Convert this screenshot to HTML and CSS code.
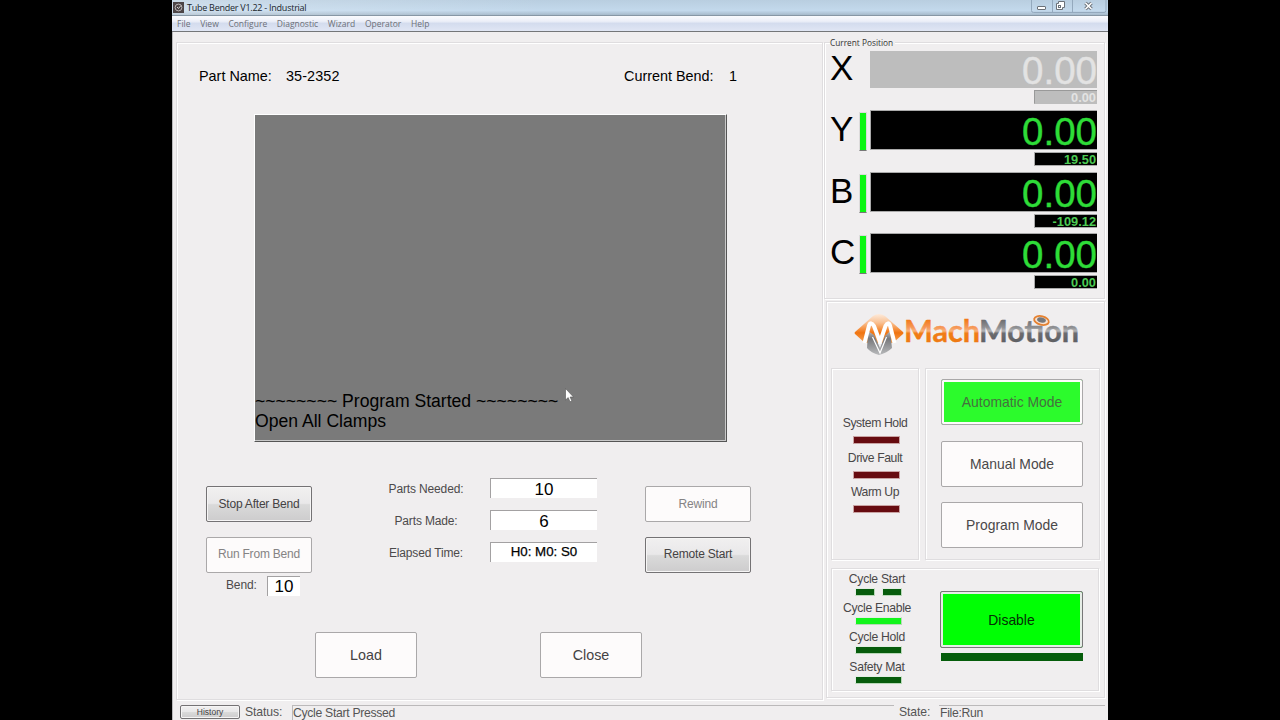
FILE: index.html
```html
<!DOCTYPE html>
<html lang="en">
<head>
    <meta charset="utf-8">
    <title>Tube Bender V1.22 - Industrial</title>
    <link rel="stylesheet" href="styles.css">
</head>
<body>
<div class="window">
    <div class="titlebar">
        <svg class="app-icon" width="11" height="11" viewBox="0 0 11 11">
            <rect width="11" height="11" fill="#4c4547"/>
            <circle cx="5.5" cy="5.5" r="3.4" fill="none" stroke="#b9b3b5" stroke-width="1"/>
            <path d="M4 5L5.5 6.500L8 3.500" fill="none" stroke="#ddd" stroke-width=".9"/>
        </svg>
        <span class="title">Tube Bender V1.22 - Industrial</span>
        <div class="window-buttons">
            <svg width="76" height="13" viewBox="0 0 76 13">
                <path d="M.5 0V10.500Q.5 12.500 2.500 12.500H73Q75 12.500 75 10.500V0M21.500 0V12M41.500 0V12" fill="none" stroke="#94a9bd"/>
                <rect x="6.500" y="6.500" width="8" height="3" rx=".5" fill="#fff" stroke="#6b7178"/>
                <path d="M27.500 1.500H33.500V7.500H31.500V9.500H25.500V3.500H27.500Z" fill="#fff" stroke="#6b7178"/>
                <rect x="27.500" y="5.500" width="2" height="2" fill="#fff" stroke="#6b7178"/>
                <path d="M54.500 3L60.500 9M60.500 3L54.500 9" stroke="#6b7178" stroke-width="3.400"/>
                <path d="M54.500 3L60.500 9M60.500 3L54.500 9" stroke="#fff" stroke-width="1.600"/>
            </svg>
        </div>
    </div>
    <div class="menubar">
        <span>File</span><span>View</span><span>Configure</span><span>Diagnostic</span><span>Wizard</span><span>Operator</span><span>Help</span>
    </div>

    <div class="content">
        <div class="main-panel">
            <div class="part-row">
                <span class="part-label">Part Name:</span>
                <span class="part-name">35-2352</span>
                <span class="bend-label">Current Bend:</span>
                <span>1</span>
            </div>

            <div class="log">
                <div>~~~~~~~~ Program Started ~~~~~~~~</div>
                <div>Open All Clamps</div>
                <svg class="cursor" width="9" height="15" viewBox="0 0 9 15">
                    <path d="M.5.5V12L3.200 9.600L5 13.800L6.900 13L5.100 9H8.500Z" fill="#fff" stroke="#555" stroke-width=".6"/>
                </svg>
            </div>

            <div class="controls">
                <div class="left-buttons">
                    <button class="btn raised">Stop After Bend</button>
                    <button class="btn disabled">Run From Bend</button>
                    <div class="bend-row"><span>Bend:</span><div class="field small">10</div></div>
                </div>
                <div class="counts">
                    <span>Parts Needed:</span><div class="field">10</div>
                    <span>Parts Made:</span><div class="field">6</div>
                    <span>Elapsed Time:</span><div class="field time">H0: M0: S0</div>
                </div>
                <div class="right-buttons">
                    <button class="btn disabled">Rewind</button>
                    <button class="btn raised">Remote Start</button>
                </div>
            </div>

            <div class="file-buttons">
                <button class="btn big">Load</button>
                <button class="btn big">Close</button>
            </div>
        </div>

        <div class="side">
            <div class="dro">
                <div class="dro-title">Current Position</div>
                <div class="axis off">
                    <span class="axis-name">X</span><div class="axis-led"></div>
                    <div class="axis-values"><div class="pos">0.00</div><div class="sub">0.00</div></div>
                </div>
                <div class="axis">
                    <span class="axis-name">Y</span><div class="axis-led"></div>
                    <div class="axis-values"><div class="pos">0.00</div><div class="sub">19.50</div></div>
                </div>
                <div class="axis">
                    <span class="axis-name">B</span><div class="axis-led"></div>
                    <div class="axis-values"><div class="pos">0.00</div><div class="sub">-109.12</div></div>
                </div>
                <div class="axis">
                    <span class="axis-name">C</span><div class="axis-led"></div>
                    <div class="axis-values"><div class="pos">0.00</div><div class="sub">0.00</div></div>
                </div>
            </div>

            <div class="machine">
                <svg class="logo" width="226" height="46" viewBox="0 0 226 46">
                    <defs>
                        <linearGradient id="orange" x1="0" y1="0" x2="0" y2="1">
                            <stop offset="0" stop-color="#fdeadb"/>
                            <stop offset=".3" stop-color="#f9c193"/>
                            <stop offset=".55" stop-color="#f58a35"/>
                            <stop offset=".65" stop-color="#f07410"/>
                            <stop offset="1" stop-color="#f7a355"/>
                        </linearGradient>
                        <linearGradient id="steel" gradientUnits="userSpaceOnUse" x1="0" y1="18" x2="0" y2="43">
                            <stop offset="0" stop-color="#c4c4c6"/>
                            <stop offset=".35" stop-color="#77787b"/>
                            <stop offset="1" stop-color="#b9babc"/>
                        </linearGradient>
                        <linearGradient id="word-orange" gradientUnits="userSpaceOnUse" x1="0" y1="8" x2="0" y2="30">
                            <stop offset="0" stop-color="#f27a18"/>
                            <stop offset=".35" stop-color="#f6995a"/>
                            <stop offset=".5" stop-color="#f9b37c"/>
                            <stop offset=".6" stop-color="#f17d16"/>
                            <stop offset="1" stop-color="#ee7a14"/>
                        </linearGradient>
                        <linearGradient id="word-gray" gradientUnits="userSpaceOnUse" x1="0" y1="8" x2="0" y2="30">
                            <stop offset="0" stop-color="#6d6e71"/>
                            <stop offset=".35" stop-color="#909194"/>
                            <stop offset=".5" stop-color="#b4b5b7"/>
                            <stop offset=".6" stop-color="#6b6c70"/>
                            <stop offset="1" stop-color="#5f6064"/>
                        </linearGradient>
                    </defs>
                    <path d="M1 22Q0 21 1 20L19 4Q25 0 31 4L49 20Q50 21 49 22L39 31L11 31Z" fill="url(#orange)"/>
                    <path d="M14 19L13 36Q17 41 25 43Q33 41 38 36L36 19L31 24L26 36L20 23Z" fill="url(#steel)"/>
                    <path d="M10.500 31L15 13.500Q17 9 20 14L26 30L31.500 14Q34 9 36 13.500L40.500 31" fill="none" stroke="#fff" stroke-width="4" stroke-linejoin="round"/>
                    <path d="M18.500 25L26 41L32.500 25" fill="none" stroke="#fff" stroke-width="1.200"/>
                    <text class="wordmark" x="50" y="30" textLength="76" lengthAdjust="spacingAndGlyphs" fill="url(#word-orange)" stroke="url(#word-orange)">Mach</text>
                    <text class="wordmark" x="125" y="30" textLength="100" lengthAdjust="spacingAndGlyphs" fill="url(#word-gray)" stroke="url(#word-gray)">Motion</text>
                    <ellipse cx="187.500" cy="8.500" rx="7.500" ry="4.300" transform="rotate(14 187.500 8.500)" fill="#f7e2d2" stroke="#e58130" stroke-width="1.800"/>
                    <ellipse cx="187.500" cy="8" rx="4.500" ry="2.500" transform="rotate(14 187.500 8)" fill="#77787b"/>
                </svg>

                <div class="machine-row">
                    <div class="box faults">
                        <span>System Hold</span><div class="led red"></div>
                        <span>Drive Fault</span><div class="led red"></div>
                        <span>Warm Up</span><div class="led red"></div>
                    </div>
                    <div class="box modes">
                        <button class="btn mode active">Automatic Mode</button>
                        <button class="btn mode">Manual Mode</button>
                        <button class="btn mode">Program Mode</button>
                    </div>
                </div>

                <div class="box cycle">
                    <div class="cycle-leds">
                        <span>Cycle Start</span>
                        <div class="led-pair"><div class="led green"></div><div class="led green"></div></div>
                        <span>Cycle Enable</span><div class="led green lit"></div>
                        <span>Cycle Hold</span><div class="led green"></div>
                        <span>Safety Mat</span><div class="led green"></div>
                    </div>
                    <div class="enable">
                        <button class="btn disable">Disable</button>
                        <div class="enable-bar"></div>
                    </div>
                </div>
            </div>
        </div>
    </div>

    <div class="statusbar">
        <button class="btn raised history">History</button>
        <span class="status-label">Status:</span>
        <div class="status-field">Cycle Start Pressed</div>
        <span class="state-label">State:</span>
        <div class="state-field">File:Run</div>
    </div>
</div>
</body>
</html>
```
FILE: styles.css
```css
* {
    box-sizing: border-box;
}
body {
    margin: 0;
    height: 720px;
    overflow: hidden;
    background: #000;
    font-family: "Liberation Sans", Arial, sans-serif;
    color: #000;
}
.window {
    width: 936px;
    height: 720px;
    margin-left: 172px;
    background: #f0eeef;
    display: flex;
    flex-direction: column;
}

/* title and menu */
.titlebar {
    height: 16px;
    flex: none;
    display: flex;
    align-items: flex-start;
    background: linear-gradient(to right, rgba(255,255,255,.25), rgba(255,255,255,0) 40%), linear-gradient(#b9cee0, #c3d9ec 70%, #a6bacb);
    border-bottom: 1px solid #8797a5;
}
.app-icon {
    margin: 2px 0 0 1px;
}
.title {
    font: 9px/16px "Open Sans", "Noto Sans", sans-serif;
    letter-spacing: -.25px;
    margin-left: 3px;
    color: #20262c;
    white-space: nowrap;
}
.window-buttons {
    margin-left: auto;
    margin-right: 1px;
    height: 13px;
}
.window-buttons svg {
    display: block;
}
.menubar {
    height: 16px;
    flex: none;
    display: flex;
    gap: 9.7px;
    padding-left: 5px;
    font: 8.5px/15px "Open Sans", "Noto Sans", sans-serif;
    color: #6d7078;
    background: linear-gradient(#fafbfe, #eceff8 35%, #d4dcee 50%, #e0e6f4);
    border-bottom: 1px solid #747679;
}

/* main area */
.content {
    height: 668px;
    flex: none;
    display: flex;
    border-left: 1px solid #b9b9bb;
    padding: 10px 1px 0 3px;
}
.main-panel {
    width: 647px;
    height: 658px;
    border: 1px solid #dfdddf;
    box-shadow: inset 1px 1px #fff, 1px 1px #fff;
}
.part-row {
    display: flex;
    height: 20px;
    margin-top: 23px;
    padding-left: 22px;
    font-size: 14.4px;
    line-height: 20px;
    white-space: nowrap;
}
.part-label {
    width: 87px;
}
.part-name {
    width: 338px;
    letter-spacing: .1px;
}
.bend-label {
    width: 105px;
}
.log {
    position: relative;
    width: 473px;
    height: 328px;
    margin: 28px 0 0 77px;
    padding-bottom: 10px;
    display: flex;
    flex-direction: column;
    justify-content: flex-end;
    background: #7a7a7a;
    border: 1px solid #fff;
    border-right-color: #555;
    border-bottom-color: #555;
    box-shadow: inset -1px -1px #c8c8c8;
    font-size: 17.6px;
    line-height: 20px;
}
.cursor {
    position: absolute;
    left: 310px;
    top: 273px;
}
.controls {
    display: flex;
    height: 190px;
    padding: 44px 0 0 29px;
    font-size: 12px;
    letter-spacing: -.15px;
    color: #4c4a4b;
}
.btn {
    display: block;
    padding: 0;
    font-family: inherit;
    font-size: 12px;
    letter-spacing: -.2px;
    color: #444243;
    background: #fdfbfb;
    border: 1px solid #aaa8a9;
    border-radius: 2px;
    white-space: nowrap;
}
.raised {
    background: linear-gradient(#f1f0f0, #e9e8e9 48%, #dadada 52%, #cdcccd);
    border-color: #747274;
    box-shadow: inset 0 0 0 1px #f6f5f5;
}
.disabled {
    color: #858384;
}
.left-buttons {
    width: 182px;
}
.left-buttons .btn, .right-buttons .btn {
    width: 106px;
    height: 36px;
    padding-bottom: 1px;
    margin-bottom: 14.5px;
}
.bend-row {
    display: flex;
    margin-top: -11px;
    padding-left: 20px;
    line-height: 18px;
}
.bend-row span {
    width: 41px;
}
.field {
    width: 107px;
    height: 20px;
    background: #fff;
    border-top: 1px solid #a3a1a2;
    border-left: 1px solid #a3a1a2;
    color: #000;
    font-size: 17px;
    line-height: 21px;
    text-align: center;
    letter-spacing: 0;
}
.field.small {
    width: 33px;
    height: 20px;
    line-height: 20px;
}
.field.time {
    font-size: 13.3px;
    line-height: 17px;
    -webkit-text-stroke: .25px #000;
}
.counts {
    display: grid;
    grid-template-columns: 78px 107px;
    grid-auto-rows: 20px;
    column-gap: 24px;
    row-gap: 12px;
    width: 257px;
    margin-top: -8px;
    line-height: 22px;
}
.counts span {
    text-align: center;
    white-space: nowrap;
    margin-left: -2px;
}
.file-buttons {
    display: flex;
    gap: 123px;
    padding-left: 138px;
}
.big {
    width: 102px;
    height: 46px;
    font-size: 14.3px;
    letter-spacing: 0;
}

/* position readouts */
.side {
    width: 281px;
    margin-left: 1px;
}
.dro {
    height: 257px;
    border: 1px solid #dfdddf;
    box-shadow: inset 1px 1px #fff, 1px 1px #fff;
    padding: 0 7px 0 5px;
}
.dro-title {
    width: 65px;
    height: 10px;
    margin-top: -5px;
    background: #f0eeef;
    font: 8.3px/10px "Open Sans", "Noto Sans", sans-serif;
    color: #333;
    white-space: nowrap;
}
.axis {
    display: flex;
    height: 61.4px;
    padding-top: 1px;
}
.axis-name {
    width: 29px;
    font-size: 35px;
    line-height: 38px;
}
.axis-led {
    width: 8px;
    height: 39px;
    margin: 2px 3px 0 1px;
    background: #0cf613;
    border: 1px solid #dcdadb;
    border-bottom-color: #777;
}
.axis-values {
    width: 227px;
    display: flex;
    flex-direction: column;
    align-items: flex-end;
    gap: 2px;
}
.pos {
    width: 227px;
    height: 40px;
    background: #000;
    border: 1px solid #aaa;
    border-right: none;
    color: #2edc38;
    font-size: 38.5px;
    line-height: 41px;
    text-align: right;
    -webkit-text-stroke: .4px;
}
.sub {
    width: 63px;
    height: 14px;
    background: #000;
    border: 1px solid #aaa;
    border-right: none;
    color: #4ccb54;
    font-size: 12.8px;
    font-weight: bold;
    line-height: 14px;
    text-align: right;
    padding-right: 1px;
}
.off .axis-led {
    visibility: hidden;
}
.off .pos {
    height: 37px;
    margin-top: 2px;
    line-height: 37px;
}
.off .pos, .off .sub {
    background: #bdbdbd;
    border-color: #bdbdbd;
    color: #e3e3e3;
}
.off .sub {
    border-color: #999 #bdbdbd #bdbdbd #999;
}

/* machine status */
.machine {
    height: 397px;
    margin: 2px 0 0 2px;
    padding: 10px 4px 0;
    border: 1px solid #dfdddf;
    box-shadow: inset 1px 1px #fff, 1px 1px #fff;
}
.logo {
    display: block;
    margin-left: 23px;
}
.wordmark {
    font: 700 30px Lato, "Open Sans", sans-serif;
    stroke-width: .4;
}
.machine-row {
    display: flex;
    justify-content: space-between;
    margin-top: 10px;
}
.box {
    border: 1px solid #dfdddf;
    box-shadow: inset 1px 1px #fff, 1px 1px #fff;
    color: #494748;
    font-size: 12.2px;
    letter-spacing: -.4px;
}
.faults {
    width: 88px;
    height: 192px;
    padding-top: 45px;
    display: flex;
    flex-direction: column;
    align-items: center;
    line-height: 18px;
}
.faults .led {
    margin: 4px 0 4.700px 3px;
}
.led {
    width: 47px;
    height: 8px;
    flex: none;
    border: 1px solid #c9a3a3;
}
.red {
    background: #670b10;
}
.green {
    background: #075c0d;
    border-color: #e4eee4 #b8d8b8 #b8d8b8 #e4eee4;
}
.lit {
    background: #12f51b;
}
.modes {
    width: 175px;
    height: 192px;
    padding: 10px 0 0 15px;
}
.mode {
    width: 142px;
    height: 46px;
    margin-bottom: 15.600px;
    font-size: 13.900px;
    letter-spacing: 0;
    color: #4a4849;
}
.active {
    background: #2cfb2c;
    box-shadow: inset 0 0 0 2px #fdfbfb;
    color: #45703f;
}
.cycle {
    width: 268px;
    height: 123px;
    margin-top: 8px;
    display: flex;
}
.cycle-leds {
    width: 91px;
    padding-top: 2px;
    display: flex;
    flex-direction: column;
    align-items: center;
    line-height: 17px;
}
.cycle-leds span {
    margin-left: -1px;
    letter-spacing: -.3px;
}
.cycle-leds .led {
    margin: 0 0 4.300px 2px;
}
.cycle-leds .led-pair .led {
    width: 20px;
    margin: 0;
}
.led-pair {
    display: flex;
    gap: 7px;
    margin: 0 0 4px 2px;
}
.enable {
    margin: 22px 0 0 17px;
}
.disable {
    width: 143px;
    height: 57px;
    background: #00ff04;
    border-color: #777;
    box-shadow: inset 0 0 0 2px #e6ede6;
    font-size: 13.900px;
    letter-spacing: 0;
    color: #062c06;
}
.enable-bar {
    width: 142px;
    height: 8px;
    margin: 5px 0 0 1px;
    background: #055d0b;
}

/* status bar */
.statusbar {
    height: 20px;
    display: flex;
    padding: 5px 3px 0 7px;
    border-left: 1px solid #b9b9bb;
    font-size: 12.200px;
    line-height: 15px;
    letter-spacing: -.3px;
    color: #555;
    white-space: nowrap;
}
.history {
    width: 60px;
    height: 14px;
    font-size: 8.500px;
    letter-spacing: 0;
}
.status-label {
    width: 47px;
    margin-left: 5px;
    letter-spacing: -.1px;
}
.status-field {
    width: 602px;
    border-top: 1px solid #bbb9ba;
    border-left: 1px solid #bbb9ba;
    line-height: 14px;
}
.state-label {
    width: 40px;
    margin-left: 5px;
    letter-spacing: -.1px;
}
.state-field {
    flex: 1;
    padding-left: 1px;
    border-top: 1px solid #bbb9ba;
    line-height: 14px;
}
```
